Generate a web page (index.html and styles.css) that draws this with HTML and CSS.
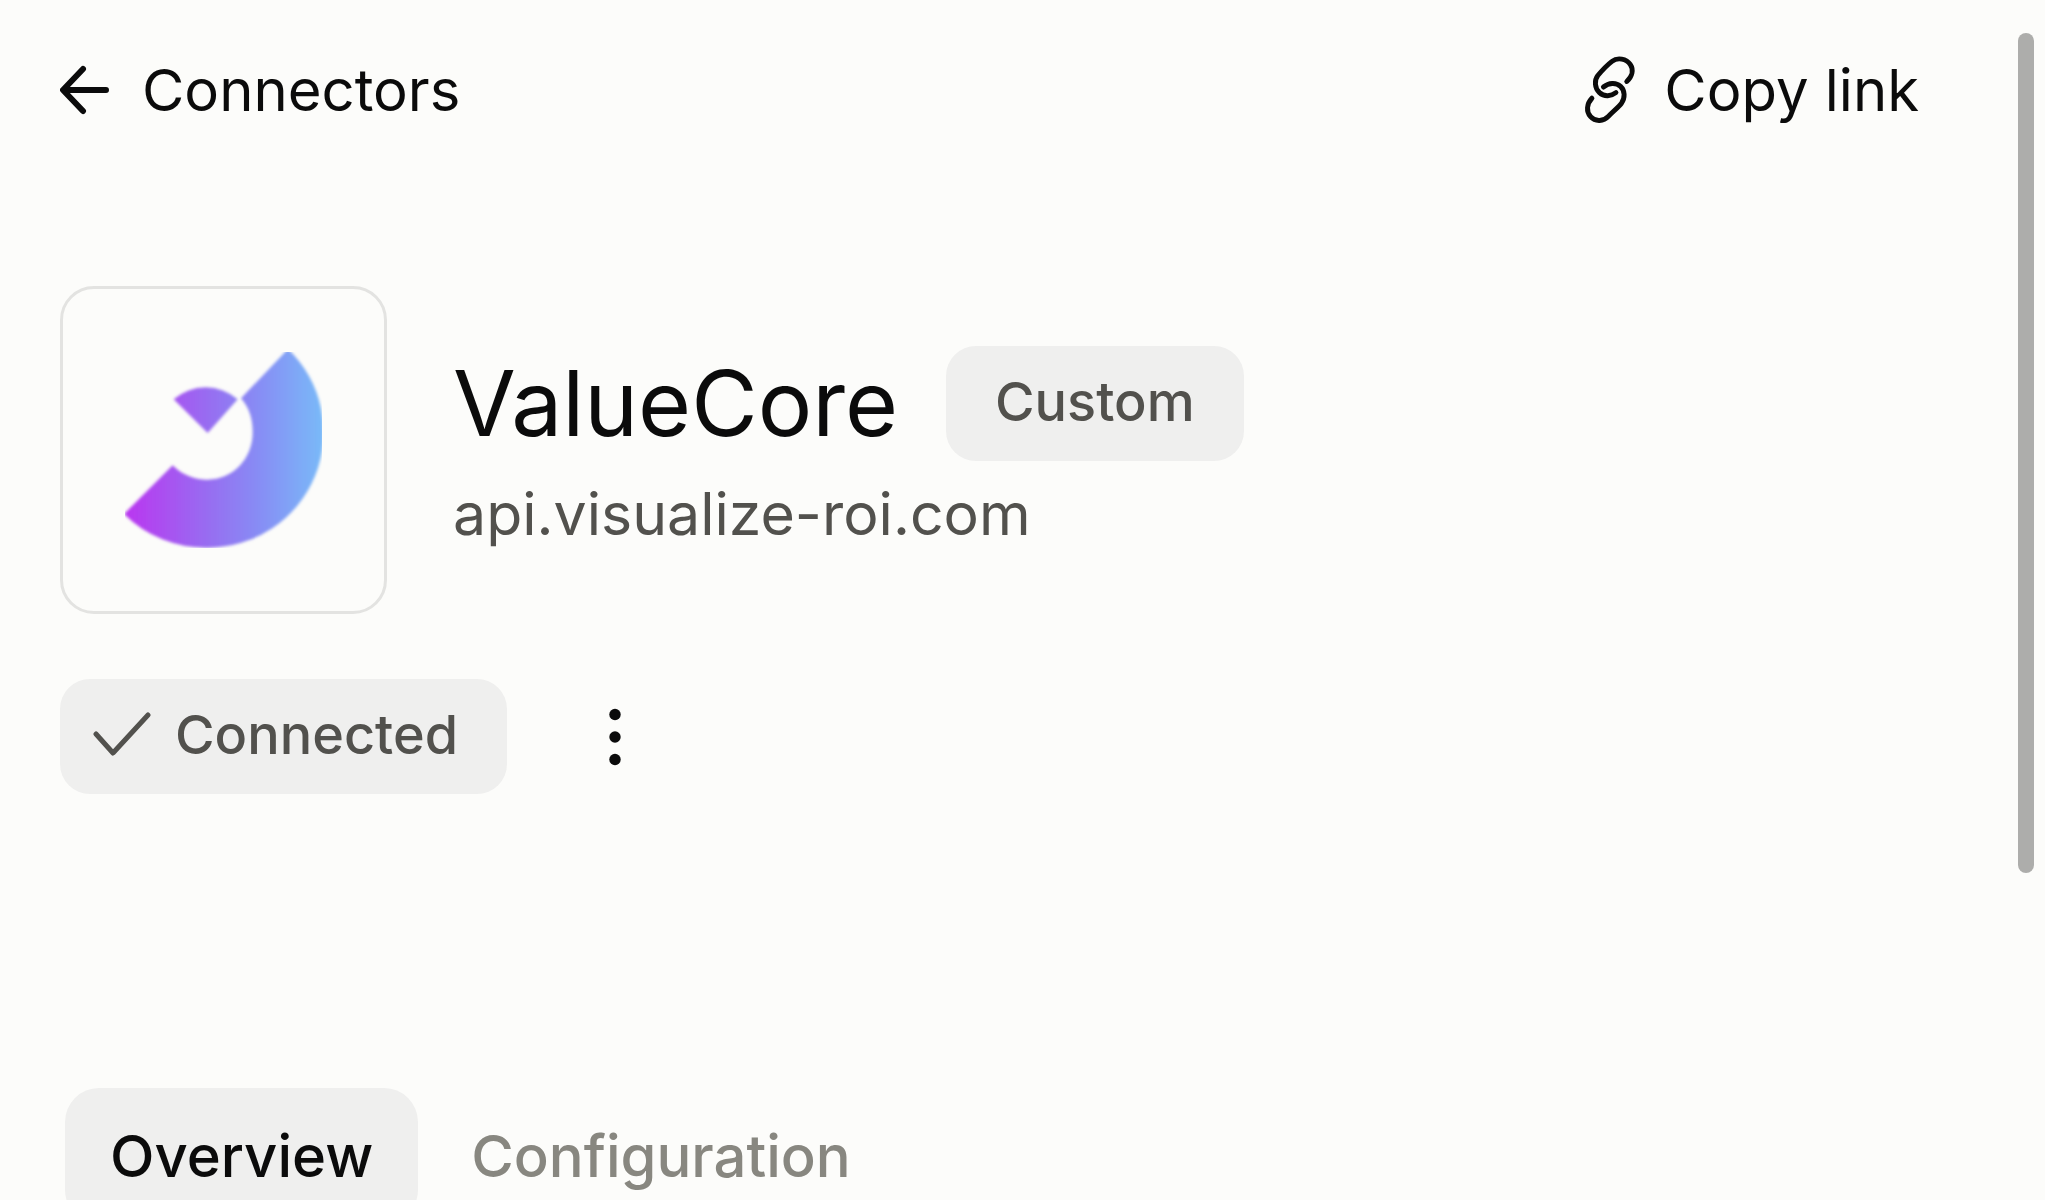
FILE: index.html
```html
<!DOCTYPE html>
<html lang="en">
<head>
    <meta charset="UTF-8">
    <meta name="viewport" content="width=device-width, initial-scale=1.0">
    <title>ValueCore - Connectors</title>
    <link rel="stylesheet" href="styles.css">
</head>
<body>
    <main class="page">
        <header class="topbar">
            <a class="back-link" href="#">
                <svg class="icon-arrow" viewBox="0 0 50 50" aria-hidden="true">
                    <path d="M46 25H4M23 4L3 25L23 46"/>
                </svg>
                Connectors
            </a>
            <button class="copy-button" type="button">
                <svg class="icon-link" viewBox="75 75 158 210" aria-hidden="true">
                    <path d="M205 154C222 138 226 118 216 103C204 84 176 80 160 93C147 103 127 124 117 136C106 150 107 174 122 188C137 202 158 199 172 188"/>
                    <path d="M134 171C150 158 172 156 186 169C200 182 200 204 189 220C180 232 160 248 149 260C135 275 110 278 95 261C81 245 83 222 99 205"/>
                </svg>
                Copy link
            </button>
        </header>

        <section class="connector">
            <div class="logo">
                <svg viewBox="225 231 591 588" role="img" aria-label="ValueCore logo">
                    <defs>
                        <linearGradient id="brand" gradientUnits="userSpaceOnUse" x1="240" y1="0" x2="816" y2="0">
                            <stop offset="0" stop-color="#b839f0"/>
                            <stop offset="0.4" stop-color="#986cf1"/>
                            <stop offset="0.65" stop-color="#888af4"/>
                            <stop offset="1" stop-color="#79b9f8"/>
                        </linearGradient>
                        <filter id="soft">
                            <feGaussianBlur stdDeviation="5"/>
                        </filter>
                    </defs>
                    <g fill="url(#brand)" filter="url(#soft)">
                        <path d="M714 222A346 346 0 0 1 472 818A346 346 0 0 1 222 717L368 571C400 604 440 614 472 614C548 614 608 552 608 472C608 430 597 397 573 370Z"/>
                        <path d="M473 474L371 373A144 142 0 0 1 563 373Z"/>
                    </g>
                </svg>
            </div>
            <div class="details">
                <div class="title-row">
                    <h1>ValueCore</h1>
                    <span class="pill">Custom</span>
                </div>
                <p class="url">api.visualize-roi.com</p>
            </div>
        </section>

        <div class="actions">
            <span class="pill pill-status">
                <svg class="icon-check" viewBox="0 0 58 46" aria-hidden="true">
                    <path d="M3 23L20 42L55 4"/>
                </svg>
                Connected
            </span>
            <button class="menu-button" type="button" aria-label="More options">
                <svg class="icon-dots" viewBox="0 0 12 58" aria-hidden="true">
                    <circle cx="6" cy="6.5" r="5.7"/>
                    <circle cx="6" cy="29" r="5.7"/>
                    <circle cx="6" cy="51.5" r="5.7"/>
                </svg>
            </button>
        </div>

        <nav class="tabs">
            <button class="tab active" type="button">Overview</button>
            <button class="tab" type="button">Configuration</button>
        </nav>
    </main>
    <div class="scroll-thumb"></div>
</body>
</html>
```
FILE: styles.css
```css
* {
    box-sizing: border-box;
}

body {
    margin: 0;
    height: 100vh;
    overflow: hidden;
    position: relative;
    background: #fcfcfa;
    color: #0b0b0b;
    font-family: Inter, "Liberation Sans", sans-serif;
}

button {
    border: none;
    padding: 0;
    background: none;
    color: inherit;
    font: inherit;
    cursor: pointer;
}

svg {
    display: block;
    flex-shrink: 0;
}

.page {
    padding: 55px 126px 0 60px;
}

.topbar {
    display: flex;
    justify-content: space-between;
    align-items: center;
    margin-bottom: 161px;
    font-size: 58px;
    line-height: 70px;
}

.back-link,
.copy-button {
    display: flex;
    align-items: center;
    gap: 32px;
    color: inherit;
    text-decoration: none;
}

.copy-button {
    gap: 28px;
}

.icon-arrow,
.icon-link,
.icon-check {
    fill: none;
    stroke: currentColor;
    stroke-linecap: round;
    stroke-linejoin: round;
}

.icon-arrow {
    width: 50px;
    height: 50px;
    stroke-width: 6;
}

.icon-link {
    width: 52px;
    height: 70px;
    stroke-width: 15;
}

.connector {
    display: flex;
    gap: 66px;
    margin-bottom: 65px;
}

.logo {
    display: flex;
    align-items: center;
    justify-content: center;
    width: 327px;
    height: 328px;
    flex-shrink: 0;
    border: 3px solid #e3e3e1;
    border-radius: 34px;
}

.logo svg {
    width: 197px;
    height: 196px;
}

.details {
    padding-top: 60px;
}

.title-row {
    display: flex;
    align-items: center;
    gap: 48px;
}

h1 {
    margin: 0;
    font-size: 91px;
    font-weight: 400;
    line-height: 115px;
}

.url {
    margin: 0;
    color: #52514d;
    font-size: 59px;
    line-height: 106px;
}

.pill {
    display: flex;
    align-items: center;
    height: 115px;
    padding: 0 49px 5px;
    border-radius: 30px;
    background: #efefee;
    color: #52514d;
    font-size: 54px;
    font-weight: 500;
}

.pill-status {
    gap: 24px;
    padding-left: 33px;
}

.icon-check {
    width: 58px;
    height: 46px;
    stroke-width: 5;
}

.actions {
    display: flex;
    align-items: center;
    gap: 50px;
    margin-bottom: 294px;
}

.menu-button {
    display: flex;
    align-items: center;
    justify-content: center;
    width: 115px;
    height: 115px;
}

.icon-dots {
    width: 12px;
    height: 58px;
    fill: currentColor;
}

.tabs {
    display: flex;
    gap: 8px;
    padding-left: 5px;
}

.tab {
    height: 136px;
    padding: 0 45px;
    border-radius: 34px;
    color: #888780;
    font-size: 58px;
    font-weight: 500;
}

.tab.active {
    background: #efefee;
    color: #0b0b0b;
}

/* overlay scrollbar */
.scroll-thumb {
    position: absolute;
    top: 33px;
    right: 11px;
    width: 16px;
    height: 70%;
    border-radius: 8px;
    background: #adadab;
}
```
